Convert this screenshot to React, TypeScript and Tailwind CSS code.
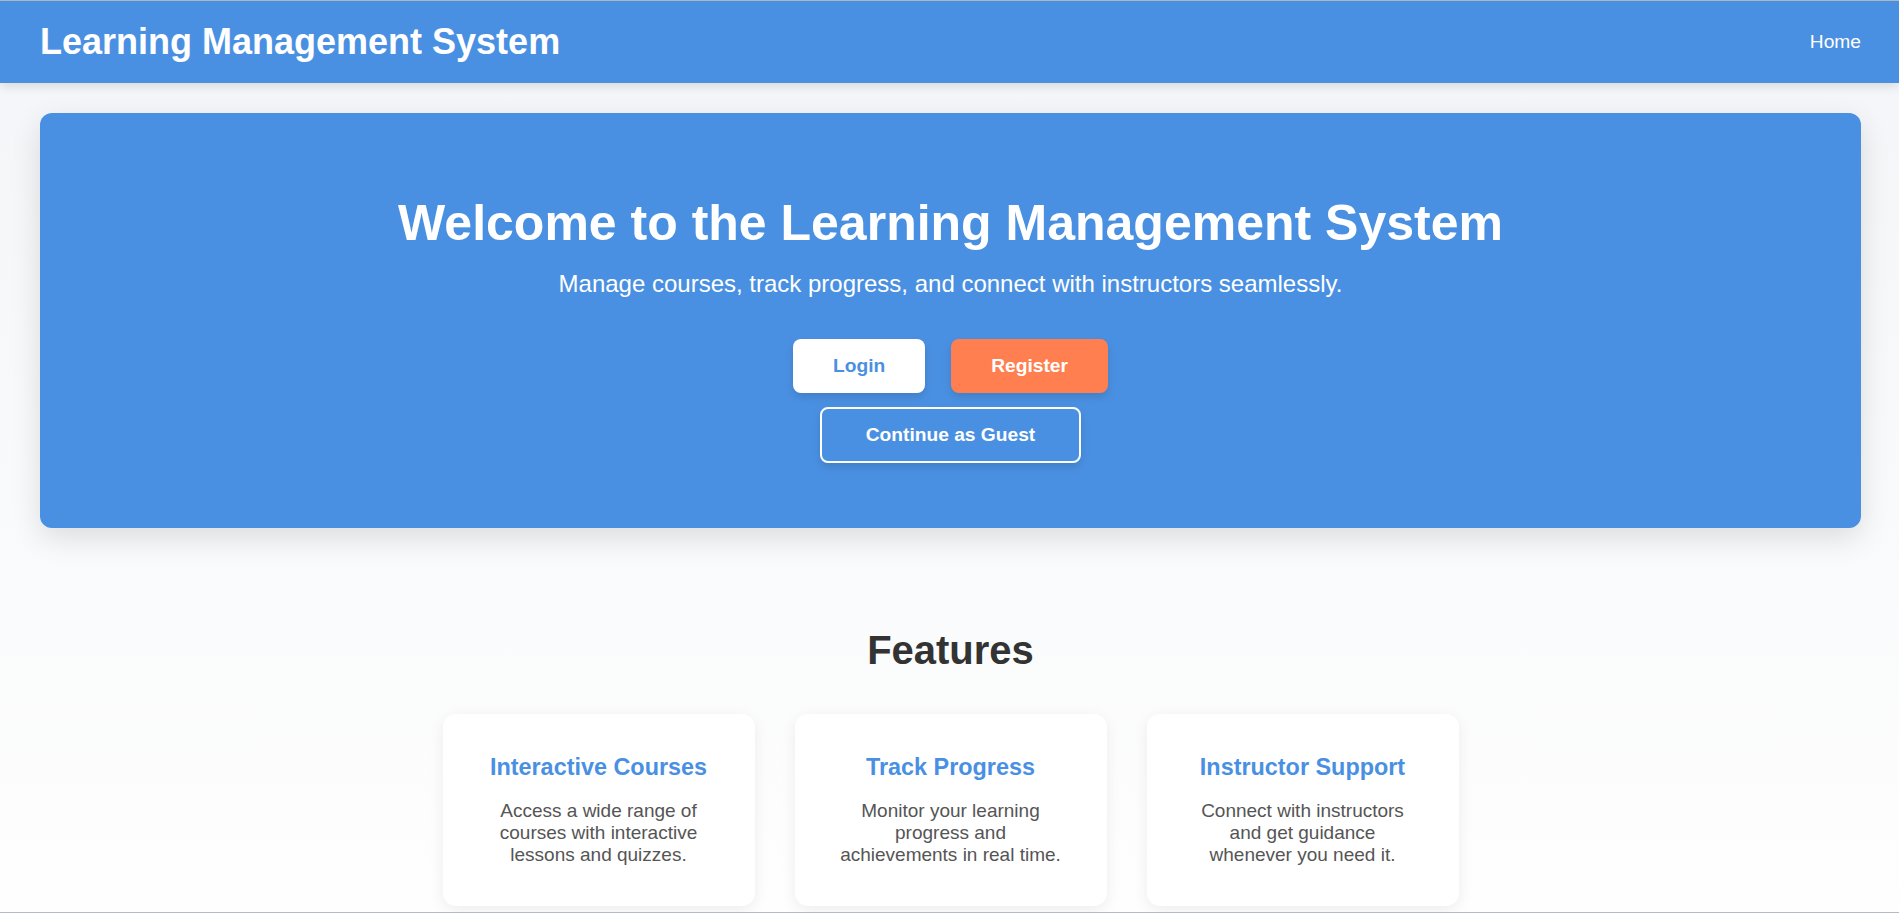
import React from 'react';

const features = [
  {
    title: 'Interactive Courses',
    text: 'Access a wide range of courses with interactive lessons and quizzes.',
  },
  {
    title: 'Track Progress',
    text: 'Monitor your learning progress and achievements in real time.',
  },
  {
    title: 'Instructor Support',
    text: 'Connect with instructors and get guidance whenever you need it.',
  },
];

export default function App() {
  return (
    <div className="min-h-screen border-t border-[#b3bcc4] bg-gradient-to-b from-[#f3f5f8] to-[#fefefe] font-['Liberation_Sans',Arial,sans-serif]">
      {/* Header */}
      <header className="h-[82px] bg-[#4a90e2] pl-10 pr-[38px] flex items-center justify-between shadow-[0_3px_10px_rgba(0,0,0,0.12)] relative z-10">
        <h1 className="text-[36px] leading-[40px] font-bold text-white">Learning Management System</h1>
        <nav className="pt-[2px]">
          <a href="#" className="text-white text-[19.2px] leading-[normal]">
            Home
          </a>
        </nav>
      </header>

      <main className="pl-10 pr-[38px] pt-[30px]">
        {/* Hero */}
        <section className="bg-[#4a90e2] rounded-xl pt-[81px] pb-[65px] text-center text-white shadow-[0_10px_30px_rgba(0,0,0,0.12)]">
          <h2 className="text-[50px] leading-[normal] font-bold">Welcome to the Learning Management System</h2>
          <p className="mt-[18px] text-[24px] leading-[normal]">
            Manage courses, track progress, and connect with instructors seamlessly.
          </p>
          <div className="mt-[41px] flex justify-center gap-[26px]">
            <button className="bg-white text-[#4a90e2] font-bold text-[19.2px] leading-[22px] px-10 py-4 rounded-lg shadow-[0_4px_8px_rgba(0,0,0,0.12)]">
              Login
            </button>
            <button className="bg-[#ff7f50] text-white font-bold text-[19.2px] leading-[22px] px-10 py-4 rounded-lg shadow-[0_4px_8px_rgba(0,0,0,0.12)]">
              Register
            </button>
          </div>
          <div className="mt-[14px] flex justify-center">
            <button className="border-2 border-white text-white font-bold text-[19.2px] leading-[22px] px-[44px] py-[15px] rounded-lg shadow-[0_4px_8px_rgba(0,0,0,0.12)]">
              Continue as Guest
            </button>
          </div>
        </section>

        {/* Features */}
        <section className="pt-[100px] text-center">
          <h2 className="text-[40px] leading-[normal] font-bold text-[#333]">Features</h2>
          <div className="mt-[41px] flex justify-center gap-10">
            {features.map((f) => (
              <div
                key={f.title}
                className="w-[312px] bg-white rounded-[13px] px-10 pt-[40px] pb-10 shadow-[0_4px_15px_rgba(0,0,0,0.07)]"
              >
                <h3 className="text-[23.4px] leading-[normal] font-bold text-[#4a90e2]">{f.title}</h3>
                <p className="mt-[19px] text-[19px] leading-[normal] text-[#555]">{f.text}</p>
              </div>
            ))}
          </div>
        </section>
      </main>

      <div className="fixed bottom-0 left-0 right-0 h-px bg-[#b3bcc4]" />
    </div>
  );
}
